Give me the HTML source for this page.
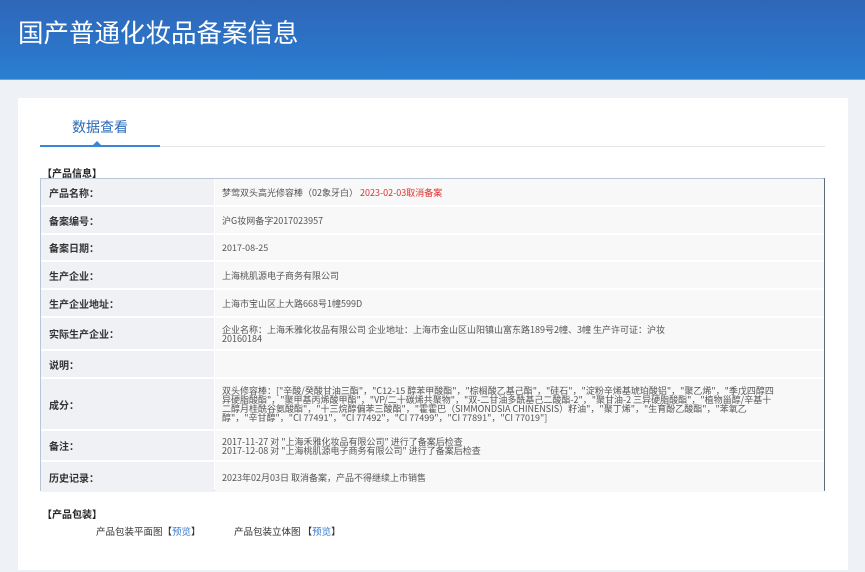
<!DOCTYPE html>
<html><head><meta charset="utf-8"><style>
*{margin:0;padding:0;box-sizing:border-box}
body{width:865px;height:572px;overflow:hidden;background:#eef2f6;font-family:"Liberation Sans","Noto Sans CJK SC",sans-serif;position:relative}
.hdr{position:absolute;left:0;top:0;width:865px;height:80px;background:linear-gradient(180deg,#2f66b8 0%,#2b74c8 60%,#2a7fd2 100%);border-bottom:1px solid #6aa4e0}
.hdr h1{position:absolute;left:18px;top:13px;color:#fff;font-weight:normal;font-size:25.5px;font-family:"Noto Sans CJK SC",sans-serif}
.panel{position:absolute;left:18px;top:98px;width:830px;height:472px;background:#fff}
.tab{position:absolute;left:72px;top:117px;font-size:14px;color:#2a6ab8;font-family:"Noto Sans CJK SC",sans-serif}
.gl{position:absolute;left:40px;top:146px;width:785px;height:1px;background:#e2e5ea}
.bl{position:absolute;left:40px;top:145px;width:120px;height:2px;background:#3a86d6}
.tri{position:absolute;left:93px;top:141px;width:0;height:0;border-left:4px solid transparent;border-right:4px solid transparent;border-bottom:4px solid #3a86d6}
.sec{position:absolute;font-size:10px;font-weight:bold;color:#222;font-family:"Noto Sans CJK SC",sans-serif}
.tbl{position:absolute;left:40px;top:178px;width:785px;height:313px;border:1px solid #b9c6da;border-right:2px solid #5c6a7c;background:#fff}
.r{position:absolute;left:0;width:783px;border-bottom:2px solid #fff}
.l{position:absolute;left:0;top:0;bottom:0;width:173px;background:#eff1f4;font-size:10px;font-weight:bold;color:#333;padding-left:8px;display:flex;align-items:center;font-family:"Noto Sans CJK SC",sans-serif}
.v{position:absolute;left:174px;right:0;top:0;bottom:0;background:#f8f8f8;font-size:9px;color:#555;padding-left:7px;display:flex;align-items:center;line-height:9px;font-family:"Noto Sans CJK SC",sans-serif}
.red{color:#e03030}
.pk{position:absolute;top:524px;font-size:9.5px;color:#333;font-family:"Noto Sans CJK SC",sans-serif}
.pk a{color:#3b7fd0;text-decoration:none}
</style></head><body>
<div class="hdr"><h1>国产普通化妆品备案信息</h1></div>
<div class="panel"></div>
<div class="tab">数据查看</div>
<div class="gl"></div><div class="bl"></div><div class="tri"></div>
<div class="sec" style="left:42px;top:165px">【产品信息】</div>
<div class="tbl">
<div class="r" style="top:0;height:28px"><div class="l">产品名称：</div><div class="v">梦莺双头高光修容棒（02象牙白）&nbsp;<span class="red">2023-02-03取消备案</span></div></div>
<div class="r" style="top:28px;height:28px"><div class="l">备案编号：</div><div class="v">沪G妆网备字2017023957</div></div>
<div class="r" style="top:56px;height:27px"><div class="l">备案日期：</div><div class="v">2017-08-25</div></div>
<div class="r" style="top:83px;height:28px"><div class="l">生产企业：</div><div class="v">上海桃肌源电子商务有限公司</div></div>
<div class="r" style="top:111px;height:28px"><div class="l">生产企业地址：</div><div class="v">上海市宝山区上大路668号1幢599D</div></div>
<div class="r" style="top:139px;height:33px"><div class="l">实际生产企业：</div><div class="v">企业名称：上海禾雅化妆品有限公司 企业地址：上海市金山区山阳镇山富东路189号2幢、3幢 生产许可证：沪妆<br>20160184</div></div>
<div class="r" style="top:172px;height:28px"><div class="l">说明：</div><div class="v"></div></div>
<div class="r" style="top:200px;height:52px"><div class="l">成分：</div><div class="v">双头修容棒：["辛酸/癸酸甘油三酯"，"C12-15 醇苯甲酸酯"，"棕榈酸乙基己酯"，"硅石"，"淀粉辛烯基琥珀酸铝"，"聚乙烯"，"季戊四醇四<br>异硬脂酸酯"，"聚甲基丙烯酸甲酯"，"VP/二十碳烯共聚物"，"双-二甘油多酰基己二酸酯-2"，"聚甘油-2 三异硬脂酸酯"，"植物甾醇/辛基十<br>二醇月桂酰谷氨酸酯"，"十三烷醇偏苯三酸酯"，"霍霍巴（SIMMONDSIA CHINENSIS）籽油"，"聚丁烯"，"生育酚乙酸酯"，"苯氧乙<br>醇"，"辛甘醇"，"CI 77491"，"CI 77492"，"CI 77499"，"CI 77891"，"CI 77019"]</div></div>
<div class="r" style="top:252px;height:31px"><div class="l">备注：</div><div class="v">2017-11-27 对 "上海禾雅化妆品有限公司" 进行了备案后检查<br>2017-12-08 对 "上海桃肌源电子商务有限公司" 进行了备案后检查</div></div>
<div class="r" style="top:283px;height:30px;border-bottom:0"><div class="l">历史记录：</div><div class="v">2023年02月03日 取消备案，产品不得继续上市销售</div></div>
</div>
<div class="sec" style="left:42px;top:506px">【产品包装】</div>
<div class="pk" style="left:96px">产品包装平面图【<a>预览</a>】</div>
<div class="pk" style="left:234px">产品包装立体图 【<a>预览</a>】</div>
</body></html>
